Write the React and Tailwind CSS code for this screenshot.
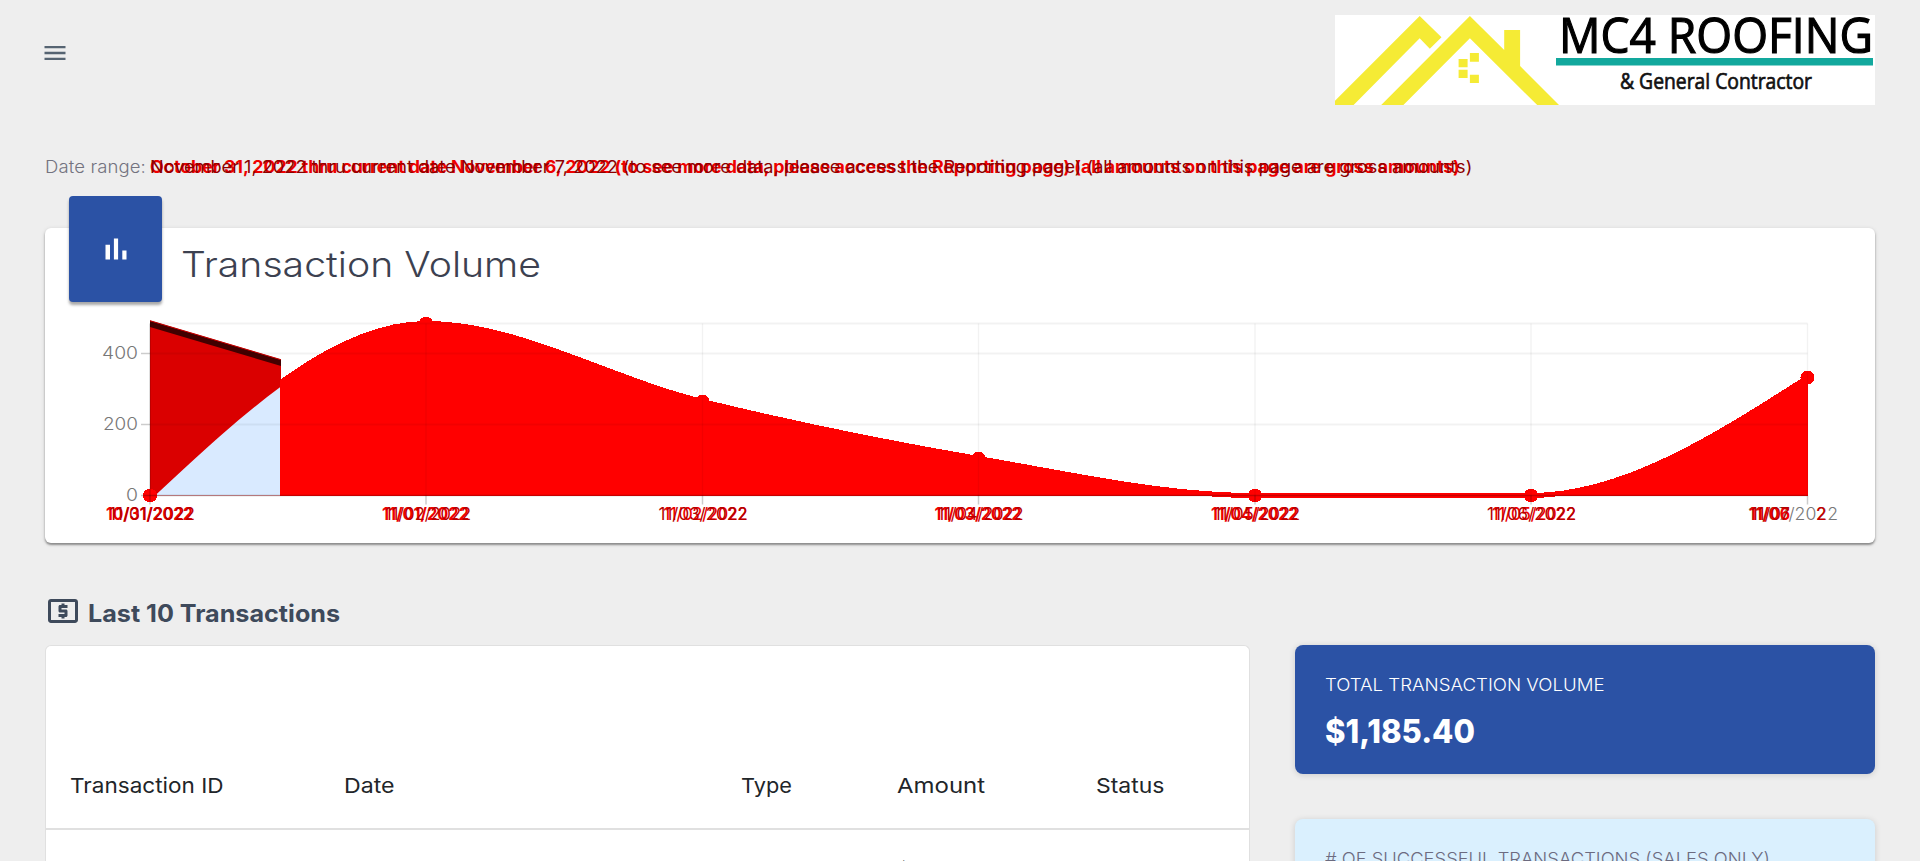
import React from "react";

const POINTS = [
  [105, 192],
  [381, 20],
  [657.5, 98],
  [933.5, 155],
  [1210, 192],
  [1486, 192],
  [1762.5, 74],
];

const LABELS = [
  ["10/31/2022", "11/01/2022"],
  ["11/01/2022", "11/02/2022"],
  ["11/02/2022", "11/03/2022"],
  ["11/03/2022", "11/04/2022"],
  ["11/04/2022", "11/05/2022"],
  ["11/05/2022", "11/06/2022"],
];

/* Monotone cubic interpolation through the data points. */
function monotonePath(p) {
  const n = p.length;
  const h = [];
  const s = [];
  for (let i = 0; i < n - 1; i++) {
    h.push(p[i + 1][0] - p[i][0]);
    s.push((p[i + 1][1] - p[i][1]) / h[i]);
  }
  const m = new Array(n).fill(0);
  for (let i = 1; i < n - 1; i++) {
    const q = (s[i - 1] * h[i] + s[i] * h[i - 1]) / (h[i - 1] + h[i]);
    m[i] =
      (Math.sign(s[i - 1]) + Math.sign(s[i])) *
      Math.min(Math.abs(s[i - 1]), Math.abs(s[i]), 0.5 * Math.abs(q));
  }
  m[0] = (3 * s[0] - m[1]) / 2;
  m[n - 1] = (3 * s[n - 2] - m[n - 2]) / 2;
  let d = `M${p[0][0]},${p[0][1]}`;
  for (let i = 0; i < n - 1; i++) {
    const k = h[i] / 3;
    d += `C${p[i][0] + k},${p[i][1] + k * m[i]} ${p[i + 1][0] - k},${p[i + 1][1] - k * m[i + 1]} ${p[i + 1][0]},${p[i + 1][1]}`;
  }
  return d;
}

const LINE = monotonePath(POINTS);
const AREA = LINE + "L1762.5,192L105,192Z";

function Logo() {
  return (
    <svg viewBox="0 0 540 90" className="h-[90px] w-[540px] bg-white">
      <g fill="#f5eb35">
        <path d="M0 85.7L84.7 1L106.5 22.3L94.8 33.7L84.7 23.3L18.6 90H0Z" />
        <path d="M46.2 90L134.9 1L169.2 35V15H185.1V51L224 90H202.2L134.9 23.3L68.4 90Z" />
        <path d="M123.6 44h9v8.3h-9zM134.9 38h9v8.7h-9zM123.6 54.7h9v8.3h-9zM134.9 59.7h9v8.3h-9z" />
      </g>
      <path d="M221 43h317v7.6H221z" fill="#12a89d" />
      <g fontFamily="'Open Sans', sans-serif" fill="#000">
        <text x="224" y="37.5" fontSize="50" textLength="314" lengthAdjust="spacingAndGlyphs" stroke="#000" strokeWidth="1.2">
          MC4 ROOFING
        </text>
        <text x="285" y="74" fontSize="21.5" textLength="192" lengthAdjust="spacingAndGlyphs" fill="#111" stroke="#111" strokeWidth="0.7">
          &amp; General Contractor
        </text>
      </g>
    </svg>
  );
}

function Chart() {
  return (
    <svg viewBox="0 0 1830 239" className="-mt-px block h-[239px] w-full">
      <defs>
        <clipPath id="recent">
          <rect x="235" y="0" width="1600" height="239" />
        </clipPath>
        <clipPath id="first">
          <rect x="105" y="0" width="130" height="192" />
        </clipPath>
      </defs>
      <g transform="translate(0 0.5)">
        <path d="M105 17L236 56V192H105Z" fill="#da0000" />
        <path d="M105 17.5L236 56.5V62.5L105 23.5Z" fill="#420000" />
        <path d="M105 17.2L236 56.2" stroke="#c00000" strokeWidth="1" />
        <path d={AREA} fill="#d9eaff" clipPath="url(#first)" />
        <g clipPath="url(#first)">
          <path d={LINE} fill="none" stroke="#da0000" strokeWidth="7" />
        </g>
        <g clipPath="url(#recent)" fill="#ff0000">
          <path d={AREA} shapeRendering="crispEdges" />
          <path d={LINE} fill="none" stroke="#ff0000" strokeWidth="5" shapeRendering="crispEdges" />
        </g>
        {POINTS.map(([x, y]) => (
          <circle key={x} cx={x} cy={y} r="7" fill="#ff0000" shapeRendering="crispEdges" />
        ))}
        <g stroke="#000" strokeOpacity="0.05" strokeWidth="2">
          <path d="M105 20H1762.5M105 50H1762.5M105 121H1762.5" />
          <path d="M381 20V192M657.5 20V192M933.5 20V192M1210 20V192M1486 20V192M1762.5 20V192" strokeWidth="1.4" />
        </g>
        <path d="M105 20V192" stroke="#000" strokeOpacity="0.25" />
        <path d="M96 192H1762.5" stroke="#000" strokeOpacity="0.22" strokeWidth="1.7" />
        <path d="M96 50H105M96 121H105M105 192V201M381 192V201M657.5 192V201M933.5 192V201M1210 192V201M1486 192V201M1762.5 192V201" stroke="#000" strokeOpacity="0.2" strokeWidth="1.5" />
      </g>
      <g fontFamily="Inter, sans-serif" fontWeight="300" fontSize="17" fill="#777">
        <text x="57" y="56" textLength="36" lengthAdjust="spacingAndGlyphs">400</text>
        <text x="58" y="127" textLength="35" lengthAdjust="spacingAndGlyphs">200</text>
        <text x="81" y="198" textLength="12" lengthAdjust="spacingAndGlyphs">0</text>
      </g>
      <g fontFamily="Inter, sans-serif" fontSize="17">
        {LABELS.map(([a, b], i) => {
          const x = POINTS[i][0];
          const thin = i === 2 || i === 5;
          return (
            <g key={b}>
              <text x={thin ? x - 39 : x - 44} y="217" textLength={thin ? 84 : 87} lengthAdjust="spacingAndGlyphs" fill="#f00000" fontWeight={thin ? 500 : 700}>{a}</text>
              <text x={thin ? x - 44 : x - 41} y="217" textLength={thin ? 89 : 86} lengthAdjust="spacingAndGlyphs" fill="#b40000" fontWeight="400">{b}</text>
            </g>
          );
        })}
        <text x="1703" y="217" textLength="90" lengthAdjust="spacingAndGlyphs" fill="#777" fontWeight="300">11/07/2022</text>
        <text x="1704" y="217" textLength="41" lengthAdjust="spacingAndGlyphs" fill="#f00000" fontWeight="700">11/06</text>
        <text x="1706" y="217" textLength="39" lengthAdjust="spacingAndGlyphs" fill="#b40000" fontWeight="400">11/07</text>
        <text x="1771" y="217" fill="#c00000" fontWeight="500">2</text>
      </g>
    </svg>
  );
}

const TAIL = ", 2022 (to see more data, please access the Reporting page) (all amounts on this page are gross amounts)";

const COLUMNS = [
  { name: "Transaction ID", cell: "w-[274px]", label: "inline-block origin-left scale-x-[1.1]" },
  { name: "Date", cell: "w-[397px]", label: "inline-block origin-left scale-x-[1.13]" },
  { name: "Type", cell: "w-[156px]", label: "inline-block origin-left scale-x-[1.06]" },
  { name: "Amount", cell: "w-[199px]", label: "inline-block origin-left scale-x-[1.17]" },
  { name: "Status", cell: "w-[120px]", label: "inline-block origin-left scale-x-[1.12]" },
];

export default function App() {
  return (
    <div className="flex h-[861px] w-full flex-col overflow-hidden bg-[#eeeeee] px-[45px] font-['Inter',sans-serif]">
      <header className="flex h-[105px] shrink-0 items-start justify-between pt-[15px]">
        <svg viewBox="0 0 24 24" className="-ml-[4.5px] mt-6 size-7" fill="#566472">
          <path d="M3 18h18v-2H3v2zm0-5h18v-2H3v2zm0-7v2h18V6H3z" />
        </svg>
        <Logo />
      </header>

      <div className="mt-[50px] flex h-6 shrink-0 items-center whitespace-nowrap text-[17px] leading-6">
        <span className="w-[105px]">
          <span className="inline-block origin-left scale-x-[1.09] font-light tracking-[0.1px] text-[#73737f]">Date range:</span>
        </span>
        <div className="grid justify-items-start">
          <span className="origin-left scale-x-[1.048] font-bold tracking-[-0.1px] text-[#ee0000] [grid-area:1/1]">{"October 31, 2022 thru current date November 6" + TAIL}</span>
          <span className="origin-left scale-x-[1.067] tracking-[0px] text-[#8c0000] [grid-area:1/1]">{"November 1, 2022 thru current date November 7" + TAIL}</span>
        </div>
      </div>

      <section className="mt-[49px] flex h-[315px] shrink-0 flex-col rounded-md bg-white shadow-[0_2px_2px_rgba(0,0,0,0.35),0_1px_4px_rgba(0,0,0,0.15)]">
        <div className="flex h-[76px] shrink-0 items-start pl-6">
          <div className="-mt-8 flex h-[106px] w-[93px] items-center justify-center rounded-[4px] bg-[#2b52a5] shadow-[0_3px_3px_rgba(0,0,0,0.35)]">
            <svg viewBox="0 0 24 24" className="size-9" fill="#fff">
              <path d="M5 9.2h3V19H5zM10.6 5h2.8v14h-2.8zm5.6 8H19v6h-2.8z" />
            </svg>
          </div>
          <h1 className="ml-[19px] mt-3 origin-left scale-x-[1.12] text-[35px] font-light leading-[48px] tracking-[0px] text-[#3c4150]">Transaction Volume</h1>
        </div>
        <Chart />
      </section>

      <div className="mt-[50px] flex h-9 shrink-0 items-center">
        <svg viewBox="0 0 24 24" className="size-9" fill="#3e4a5b">
          <path d="M11 17h2v-1h1c.55 0 1-.45 1-1v-3c0-.55-.45-1-1-1h-3v-1h4V8h-2V7h-2v1h-1c-.55 0-1 .45-1 1v3c0 .55.45 1 1 1h3v1H9v2h2v1zm9-13H4c-1.11 0-1.99.89-1.99 2L2 18c0 1.11.89 2 2 2h16c1.11 0 2-.89 2-2V6c0-1.11-.89-2-2-2zm0 14H4V6h16v12z" />
        </svg>
        <h2 className="ml-[7px] mt-1.5 origin-left scale-x-[1.048] text-2xl font-bold text-[#3e4a5b]">Last 10 Transactions</h2>
      </div>

      <div className="mt-4 flex min-h-0 flex-1 gap-[45px]">
        <section className="flex w-[1205px] shrink-0 flex-col rounded-t-md border border-b-0 border-[#e0e0e0] bg-white pt-[110px] text-[20.5px] text-[#212529]">
          <div className="flex h-[74px] shrink-0 items-start border-b-2 border-[#e0e0e0] pl-6 pt-[15px] leading-[30px]">
            {COLUMNS.map((c) => (
              <span key={c.name} className={c.cell}>
                <span className={c.label}>{c.name}</span>
              </span>
            ))}
          </div>
          <div className="flex shrink-0 pl-6 pt-[25px] text-[18px] font-light leading-[30px]">
            <span className="-mt-px ml-[274px] w-[554px]">
              <span className="inline-block origin-left scale-x-[1.08]">11/07/2022</span>
            </span>
            <span>$250.00</span>
          </div>
        </section>
        <aside className="flex flex-1 flex-col gap-[45px]">
          <div className="h-[129px] shrink-0 rounded-lg bg-[#2b52a5] pl-[30px] pt-[27px] text-white shadow-[0_1px_6px_rgba(0,0,0,0.15)]">
            <div className="origin-left scale-x-[1.065] text-[17.5px] font-light leading-[26px]">TOTAL TRANSACTION VOLUME</div>
            <div className="mt-[13px] origin-left scale-x-[0.97] text-[32px] font-extrabold leading-[42px]">$1,185.40</div>
          </div>
          <div className="h-[129px] shrink-0 rounded-lg bg-[#daf0fe] pl-[30px] pt-[27px] shadow-[0_1px_6px_rgba(0,0,0,0.15)]">
            <div className="origin-left scale-x-[1.05] text-[17.5px] font-light leading-[26px] text-[#6c6b80]"># OF SUCCESSFUL TRANSACTIONS (SALES ONLY)</div>
          </div>
        </aside>
      </div>
    </div>
  );
}
